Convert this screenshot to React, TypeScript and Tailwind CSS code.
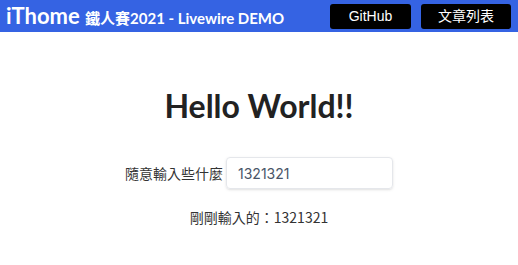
import { useState } from "react";

export default function App() {
  const [text, setText] = useState("1321321");

  return (
    <div className="min-h-screen bg-white">
      <header className="h-8 bg-[#3563e3] flex items-center justify-between pl-[6px] pr-[7px]">
        <h1 className="font-['Lato'] font-bold text-white leading-none whitespace-nowrap">
          <span className="text-[22px]">iThome </span>
          <span className="text-[15px] font-['Lato','Noto_Sans_CJK_TC',sans-serif]">鐵人賽2021 - Livewire DEMO</span>
        </h1>
        <nav className="flex gap-[10px] font-['Liberation_Sans','Noto_Sans_CJK_TC',sans-serif] text-sm text-white">
          <a href="#" className="w-[81px] h-[25px] flex items-center justify-center bg-black rounded-[3px]">
            GitHub
          </a>
          <a href="#" className="w-[90px] h-[25px] flex items-center justify-center bg-black rounded-[3px]">
            文章列表
          </a>
        </nav>
      </header>

      <main className="flex flex-col items-center pt-[58px]">
        <h2 className="font-['Lato'] font-bold text-[32px] leading-none text-[#222]">Hello World!!</h2>

        <div className="mt-[35px] flex items-center gap-[3px] font-['Noto_Sans_CJK_TC',sans-serif] text-sm text-[#333]">
          <label htmlFor="msg">隨意輸入些什麼</label>
          <input
            id="msg"
            value={text}
            onChange={(e) => setText(e.target.value)}
            className="w-[167px] h-[32px] px-[11px] rounded border border-gray-200 shadow-sm text-sm text-[#4a5568] font-['Inter',sans-serif] outline-none"
          />
        </div>

        <p className="mt-[18px] font-['Noto_Sans_CJK_TC',sans-serif] text-sm text-[#333]">剛剛輸入的：{text}</p>
      </main>
    </div>
  );
}
